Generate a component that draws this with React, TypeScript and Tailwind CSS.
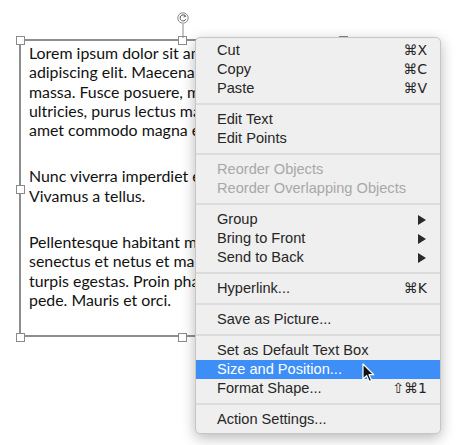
import React from "react";

type MenuEntry =
  | { kind: "sep" }
  | {
      kind: "item";
      label: string;
      shortcut?: string;
      submenu?: boolean;
      disabled?: boolean;
      active?: boolean;
    };

const menu: MenuEntry[] = [
  { kind: "item", label: "Cut", shortcut: "⌘X" },
  { kind: "item", label: "Copy", shortcut: "⌘C" },
  { kind: "item", label: "Paste", shortcut: "⌘V" },
  { kind: "sep" },
  { kind: "item", label: "Edit Text" },
  { kind: "item", label: "Edit Points" },
  { kind: "sep" },
  { kind: "item", label: "Reorder Objects", disabled: true },
  { kind: "item", label: "Reorder Overlapping Objects", disabled: true },
  { kind: "sep" },
  { kind: "item", label: "Group", submenu: true },
  { kind: "item", label: "Bring to Front", submenu: true },
  { kind: "item", label: "Send to Back", submenu: true },
  { kind: "sep" },
  { kind: "item", label: "Hyperlink...", shortcut: "⌘K" },
  { kind: "sep" },
  { kind: "item", label: "Save as Picture..." },
  { kind: "sep" },
  { kind: "item", label: "Set as Default Text Box" },
  { kind: "item", label: "Size and Position...", active: true },
  { kind: "item", label: "Format Shape...", shortcut: "⇧⌘1" },
  { kind: "sep" },
  { kind: "item", label: "Action Settings..." },
];

const paragraphs = [
  [
    "Lorem ipsum dolor sit amet, consectetuer",
    "adipiscing elit. Maecenas porttitor congue",
    "massa. Fusce posuere, magna sed pulvinar",
    "ultricies, purus lectus malesuada libero, sit",
    "amet commodo magna eros quis urna.",
  ],
  ["Nunc viverra imperdiet enim. Fusce est.", "Vivamus a tellus."],
  [
    "Pellentesque habitant morbi tristique",
    "senectus et netus et malesuada fames ac",
    "turpis egestas. Proin pharetra nonummy",
    "pede. Mauris et orci.",
  ],
];

function Handle({ className }: { className: string }) {
  return (
    <span
      className={`absolute h-[9px] w-[9px] border border-[#8a8a8a] bg-white ${className}`}
    />
  );
}

function SubmenuArrow() {
  return (
    <svg width="8" height="10" viewBox="0 0 8 10" className="mr-[1px]">
      <path d="M0 0 L8 5 L0 10 Z" fill="#2a2a2a" />
    </svg>
  );
}

export default function App() {
  return (
    <div className="relative h-[445px] w-[459px] overflow-hidden bg-white">
      {/* text box frame */}
      <div className="relative ml-[19px] mt-[39px] h-[298px] w-[324px] border-2 border-[#8e8e8e]">
        <div className="pl-[8px] pt-[2px] font-['Lato',sans-serif] text-[15.9px] leading-[19.3px] text-[#111]">
          {paragraphs.map((lines, i) => (
            <div key={i} className={i > 0 ? "mt-[27px]" : ""}>
              {lines.map((line) => (
                <div key={line} className="whitespace-nowrap">
                  {line}
                </div>
              ))}
            </div>
          ))}
        </div>

        <Handle className="left-[-5px] top-[-5px]" />
        <Handle className="left-[157px] top-[-5px]" />
        <Handle className="left-[318px] top-[-5px]" />
        <Handle className="left-[-5px] top-[144px]" />
        <Handle className="left-[318px] top-[144px]" />
        <Handle className="left-[-5px] top-[292px]" />
        <Handle className="left-[157px] top-[292px]" />
        <Handle className="left-[318px] top-[292px]" />

        {/* rotation handle */}
        <svg
          width="14"
          height="26"
          viewBox="0 0 14 26"
          className="absolute left-[155px] top-[-29px]"
        >
          <line x1="7" y1="12" x2="7" y2="26" stroke="#8a8a8a" strokeWidth="1" />
          <circle cx="7" cy="6" r="5.2" fill="white" stroke="#8a8a8a" strokeWidth="1" />
          <path
            d="M9.4 4 A3 3 0 1 0 9.8 7.2"
            fill="none"
            stroke="#555"
            strokeWidth="1"
          />
          <path d="M8 2.6 L9.7 4.3 L7.6 4.9" fill="none" stroke="#555" strokeWidth="0.9" />
        </svg>
      </div>

      {/* context menu */}
      <div className="absolute left-[195px] top-[37px] w-[246px] rounded-[5px] border border-[#c6c6c6] bg-[#efefef] pb-[4px] pt-[3px] shadow-[0_4px_14px_rgba(0,0,0,0.28)]">
        {menu.map((entry, i) =>
          entry.kind === "sep" ? (
            <div key={i} className="flex h-[12px] items-center">
              <div className="h-[2px] w-full bg-[#dcdcdc]" />
            </div>
          ) : (
            <div
              key={i}
              className={`flex h-[19px] items-center justify-between pl-[21px] pr-[13px] font-['Liberation_Sans',Arial,sans-serif] text-[14.6px] ${
                entry.active
                  ? "bg-[#3d8ef7] text-white"
                  : entry.disabled
                    ? "text-[#a8a8a8]"
                    : "text-[#262626]"
              }`}
            >
              <span>{entry.label}</span>
              {entry.shortcut ? (
                <span className="font-['DejaVu_Sans',sans-serif] text-[14px]">
                  {entry.shortcut}
                </span>
              ) : null}
              {entry.submenu ? <SubmenuArrow /> : null}
            </div>
          ),
        )}
      </div>

      {/* mouse pointer */}
      <svg
        width="14"
        height="21"
        viewBox="0 0 14 21"
        className="absolute left-[362px] top-[363px]"
      >
        <path
          d="M1 1 L1 16 L4.6 12.6 L7.2 18.6 L9.6 17.6 L7 11.7 L11.8 11.7 Z"
          fill="#111"
          stroke="white"
          strokeWidth="1.2"
          strokeLinejoin="round"
        />
      </svg>
    </div>
  );
}
